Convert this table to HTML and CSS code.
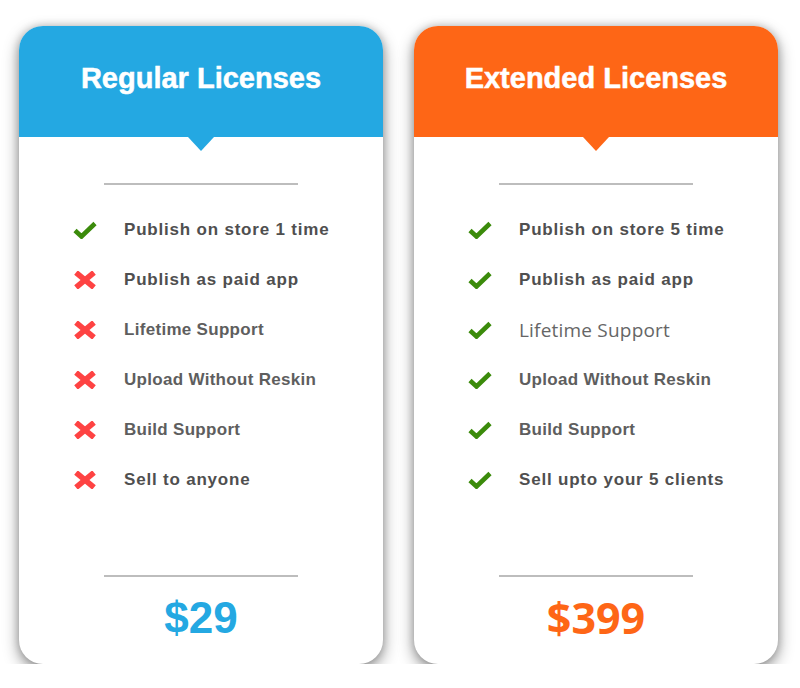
FILE: index.html
```html
<!DOCTYPE html>
<html>
<head>
<meta charset="utf-8">
<link rel="stylesheet" href="styles.css">
</head>
<body>
<svg width="0" height="0" class="defs">
  <defs>
    <symbol id="ok" viewBox="0 0 24 18">
      <path d="M2 9.5 L8.5 15.5 L22 2.5" fill="none" stroke="#3b8b0b" stroke-width="4.6" stroke-linecap="butt" stroke-linejoin="miter"/>
    </symbol>
    <symbol id="no" viewBox="0 0 24 18">
      <path d="M3 1.5 L21 16.5 M21 1.5 L3 16.5" fill="none" stroke="#fe4343" stroke-width="5.6" stroke-linecap="butt"/>
    </symbol>
  </defs>
</svg>
<main class="plans">
  <section class="card card-blue">
    <header class="card-head"><h2 class="card-title">Regular Licenses</h2></header>
    <div class="card-body">
      <hr class="rule">
      <ul class="features">
        <li class="feature"><svg class="ico"><use href="#ok"/></svg><span>Publish on store 1 time</span></li>
        <li class="feature"><svg class="ico"><use href="#no"/></svg><span>Publish as paid app</span></li>
        <li class="feature"><svg class="ico"><use href="#no"/></svg><span class="alt">Lifetime Support</span></li>
        <li class="feature"><svg class="ico"><use href="#no"/></svg><span class="alt">Upload Without Reskin</span></li>
        <li class="feature"><svg class="ico"><use href="#no"/></svg><span class="alt">Build Support</span></li>
        <li class="feature"><svg class="ico"><use href="#no"/></svg><span>Sell to anyone</span></li>
      </ul>
      <hr class="rule rule-bottom">
      <div class="price price-blue">$29</div>
    </div>
  </section>
  <section class="card card-orange">
    <header class="card-head"><h2 class="card-title">Extended Licenses</h2></header>
    <div class="card-body">
      <hr class="rule">
      <ul class="features">
        <li class="feature"><svg class="ico"><use href="#ok"/></svg><span>Publish on store 5 time</span></li>
        <li class="feature"><svg class="ico"><use href="#ok"/></svg><span>Publish as paid app</span></li>
        <li class="feature"><svg class="ico"><use href="#ok"/></svg><span class="light">Lifetime Support</span></li>
        <li class="feature"><svg class="ico"><use href="#ok"/></svg><span class="alt">Upload Without Reskin</span></li>
        <li class="feature"><svg class="ico"><use href="#ok"/></svg><span class="alt">Build Support</span></li>
        <li class="feature"><svg class="ico"><use href="#ok"/></svg><span>Sell upto your 5 clients</span></li>
      </ul>
      <hr class="rule rule-bottom">
      <div class="price price-orange">$399</div>
    </div>
  </section>
</main>
</body>
</html>
```
FILE: styles.css
```css
html, body {
  margin: 0;
  padding: 0;
  background: #ffffff;
}
.defs {
  position: absolute;
  width: 0;
  height: 0;
}
.plans {
  display: flex;
  gap: 31px;
  padding: 26px 22px 0 19px;
  font-family: "Liberation Sans", Arial, sans-serif;
}
.card {
  width: 364px;
  height: 638px;
  display: flex;
  flex-direction: column;
  background: #ffffff;
  border-radius: 24px;
  box-shadow: 0 6px 16px rgba(0, 0, 0, 0.42), 0 0 8px rgba(0, 0, 0, 0.2);
}
.card-head {
  position: relative;
  height: 111px;
  box-sizing: border-box;
  padding-top: 38px;
  border-radius: 24px 24px 0 0;
  text-align: center;
}
.card-blue .card-head { background: #24a8e2; }
.card-orange .card-head { background: #fe6616; }
.card-head::after {
  content: "";
  position: absolute;
  left: 50%;
  bottom: -14px;
  margin-left: -13px;
  border-left: 13px solid transparent;
  border-right: 13px solid transparent;
  border-top: 14px solid transparent;
}
.card-blue .card-head::after { border-top-color: #24a8e2; }
.card-orange .card-head::after { border-top-color: #fe6616; }
.card-title {
  margin: 0;
  font-size: 29px;
  line-height: 29px;
  font-weight: 700;
  color: #ffffff;
  -webkit-text-stroke: 0.5px #ffffff;
}
.card-body {
  flex: 1;
  display: flex;
  flex-direction: column;
  padding-bottom: 24px;
}
.rule {
  width: 194px;
  height: 2px;
  margin: 46px auto 0;
  border: 0;
  background: #bdbdbd;
}
.rule-bottom {
  margin-top: auto;
}
.features {
  list-style: none;
  margin: 20px 0 0;
  padding: 0 0 0 54px;
}
.feature {
  height: 50px;
  display: flex;
  align-items: center;
  gap: 27px;
  font-size: 17px;
  font-weight: 700;
  letter-spacing: 0.8px;
  color: #4f4f4f;
}
.feature .alt {
  letter-spacing: 0.3px;
  color: #5e5e5e;
}
.feature .light {
  font-family: "Open Sans", sans-serif;
  font-weight: 400;
  font-size: 19px;
  letter-spacing: 0.2px;
  color: #666666;
}
.ico {
  width: 24px;
  height: 18px;
  flex: none;
}
.price {
  margin-top: 19px;
  font-size: 44px;
  line-height: 44px;
  font-weight: 700;
  text-align: center;
}
.price-blue { color: #24a8e2; }
.price-orange {
  color: #fe6616;
  font-family: "Open Sans", sans-serif;
  font-size: 43px;
}
```
